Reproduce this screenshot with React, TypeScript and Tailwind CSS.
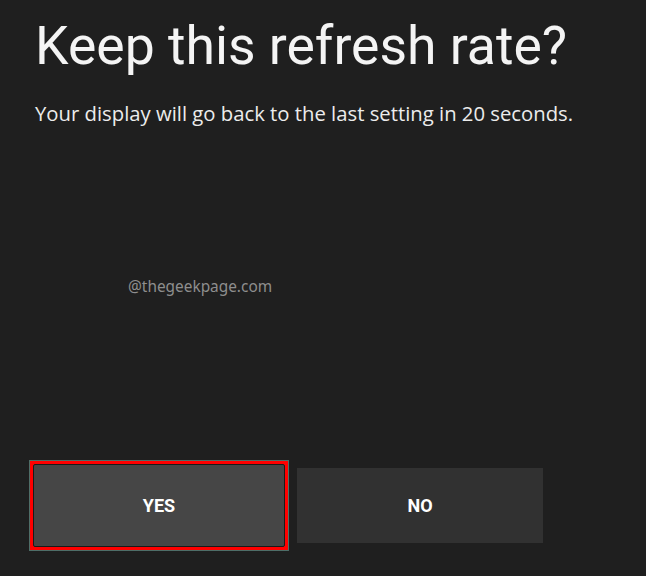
export default function App() {
  return (
    <div className="w-[646px] h-[576px] bg-[#1f1f1f] overflow-hidden flex flex-col pl-[35px]">
      <h1 className="mt-[16px] text-[53.5px] leading-[60px] text-[#f4f4f4] font-['Roboto',sans-serif]">
        Keep this refresh rate?
      </h1>
      <p className="mt-[25px] text-[20.3px] leading-[24px] text-[#ececec] font-['Open_Sans',sans-serif]">
        Your display will go back to the last setting in 20 seconds.
      </p>
      <p className="mt-[152px] ml-[93px] text-[15.4px] leading-[20px] text-[#8e8e8e] font-['Noto_Sans',sans-serif]">
        @thegeekpage.com
      </p>
      <div className="mt-[164px] -ml-[5px] flex items-center gap-[9px]">
        <div className="w-[258px] h-[89px] p-[3px] bg-[#ff0000] outline outline-1 outline-[#4e6e68]">
          <div className="h-full border border-[#1a1a1a] rounded-[2px] bg-[#464646] flex items-center justify-center">
            <span className="text-[18px] font-bold text-white font-['Roboto',sans-serif]">YES</span>
          </div>
        </div>
        <div className="w-[246px] h-[75px] bg-[#313131] flex items-center justify-center">
          <span className="text-[18px] font-bold text-white font-['Roboto',sans-serif]">NO</span>
        </div>
      </div>
    </div>
  );
}
